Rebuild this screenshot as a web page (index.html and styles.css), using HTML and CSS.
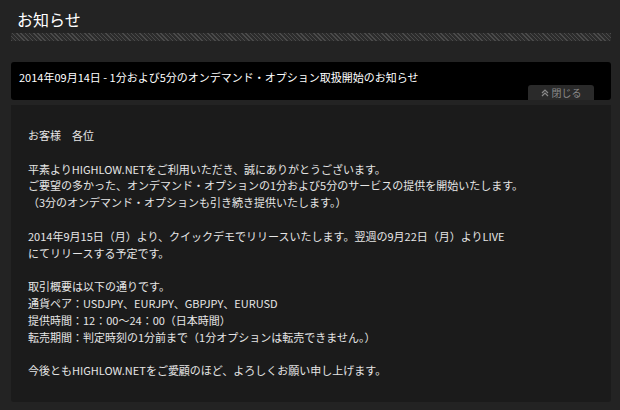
FILE: index.html
```html
<!DOCTYPE html>
<html lang="ja">
<head>
    <meta charset="UTF-8">
    <meta name="viewport" content="width=device-width, initial-scale=1.0">
    <title>お知らせ</title>
    <link rel="stylesheet" href="styles.css">
</head>
<body>
    <div class="page">
        <h1 class="page-title">お知らせ</h1>
        <div class="stripe"></div>

        <div class="news-head">
            <div class="news-title">2014年09月14日 - 1分および5分のオンデマンド・オプション取扱開始のお知らせ</div>
            <div class="tab-row">
                <button class="close-tab">
                    <svg class="chev" width="8" height="8" viewBox="0 0 8 8">
                        <path d="M1 4 L4 1 L7 4 M1 7 L4 4 L7 7" fill="none" stroke="#8a8a8a" stroke-width="1.2"/>
                    </svg>
                    閉じる
                </button>
            </div>
        </div>

        <div class="news-body">
            <p>お客様　各位</p>
            <p>平素よりHIGHLOW.NETをご利用いただき、誠にありがとうございます。<br>
            ご要望の多かった、オンデマンド・オプションの1分および5分のサービスの提供を開始いたします。<br>
            （3分のオンデマンド・オプションも引き続き提供いたします。）</p>
            <p>2014年9月15日（月）より、クイックデモでリリースいたします。翌週の9月22日（月）よりLIVE<br>
            にてリリースする予定です。</p>
            <p>取引概要は以下の通りです。<br>
            通貨ペア：USDJPY、EURJPY、GBPJPY、EURUSD<br>
            提供時間：12：00～24：00（日本時間）<br>
            転売期間：判定時刻の1分前まで（1分オプションは転売できません。）</p>
            <p>今後ともHIGHLOW.NETをご愛顧のほど、よろしくお願い申し上げます。</p>
        </div>
    </div>
</body>
</html>
```

FILE: styles.css
```css
body {
    margin: 0;
    background-color: #232323;
    font-family: "Noto Sans CJK JP", "Noto Sans", sans-serif;
    color: #e6e6e6;
}

.page {
    width: 600px;
    margin-left: 11px;
    padding-top: 7px;
}

.page-title {
    margin: 0 0 0 6px;
    font-size: 16px;
    font-weight: normal;
    line-height: 24px;
    color: #fff;
}

.stripe {
    height: 8px;
    margin-top: 2px;
    background: repeating-linear-gradient(45deg, #4a4a4a 0 1px, #2c2c2c 1px 3px);
}

.news-head {
    margin-top: 21px;
    padding: 7px 17px 0 8px;
    background-color: #000;
    border-radius: 3px;
}

.news-title {
    font-size: 11px;
    line-height: 16px;
    color: #fff;
}

.tab-row {
    display: flex;
    justify-content: flex-end;
}

.close-tab {
    display: flex;
    align-items: center;
    justify-content: center;
    gap: 3px;
    width: 66px;
    height: 15px;
    padding: 0;
    border: none;
    border-radius: 3px 3px 0 0;
    background-color: #2a2a2a;
    color: #8a8a8a;
    font-family: inherit;
    font-size: 10px;
    cursor: pointer;
}

.chev {
    display: block;
}

.news-body {
    margin-top: 5px;
    padding: 22px 17px 6px 17px;
    background-color: #1b1b1b;
    border-radius: 0 0 3px 3px;
    font-size: 11px;
    line-height: 16.8px;
}

.news-body p {
    margin: 0 0 16.8px 0;
}
```
